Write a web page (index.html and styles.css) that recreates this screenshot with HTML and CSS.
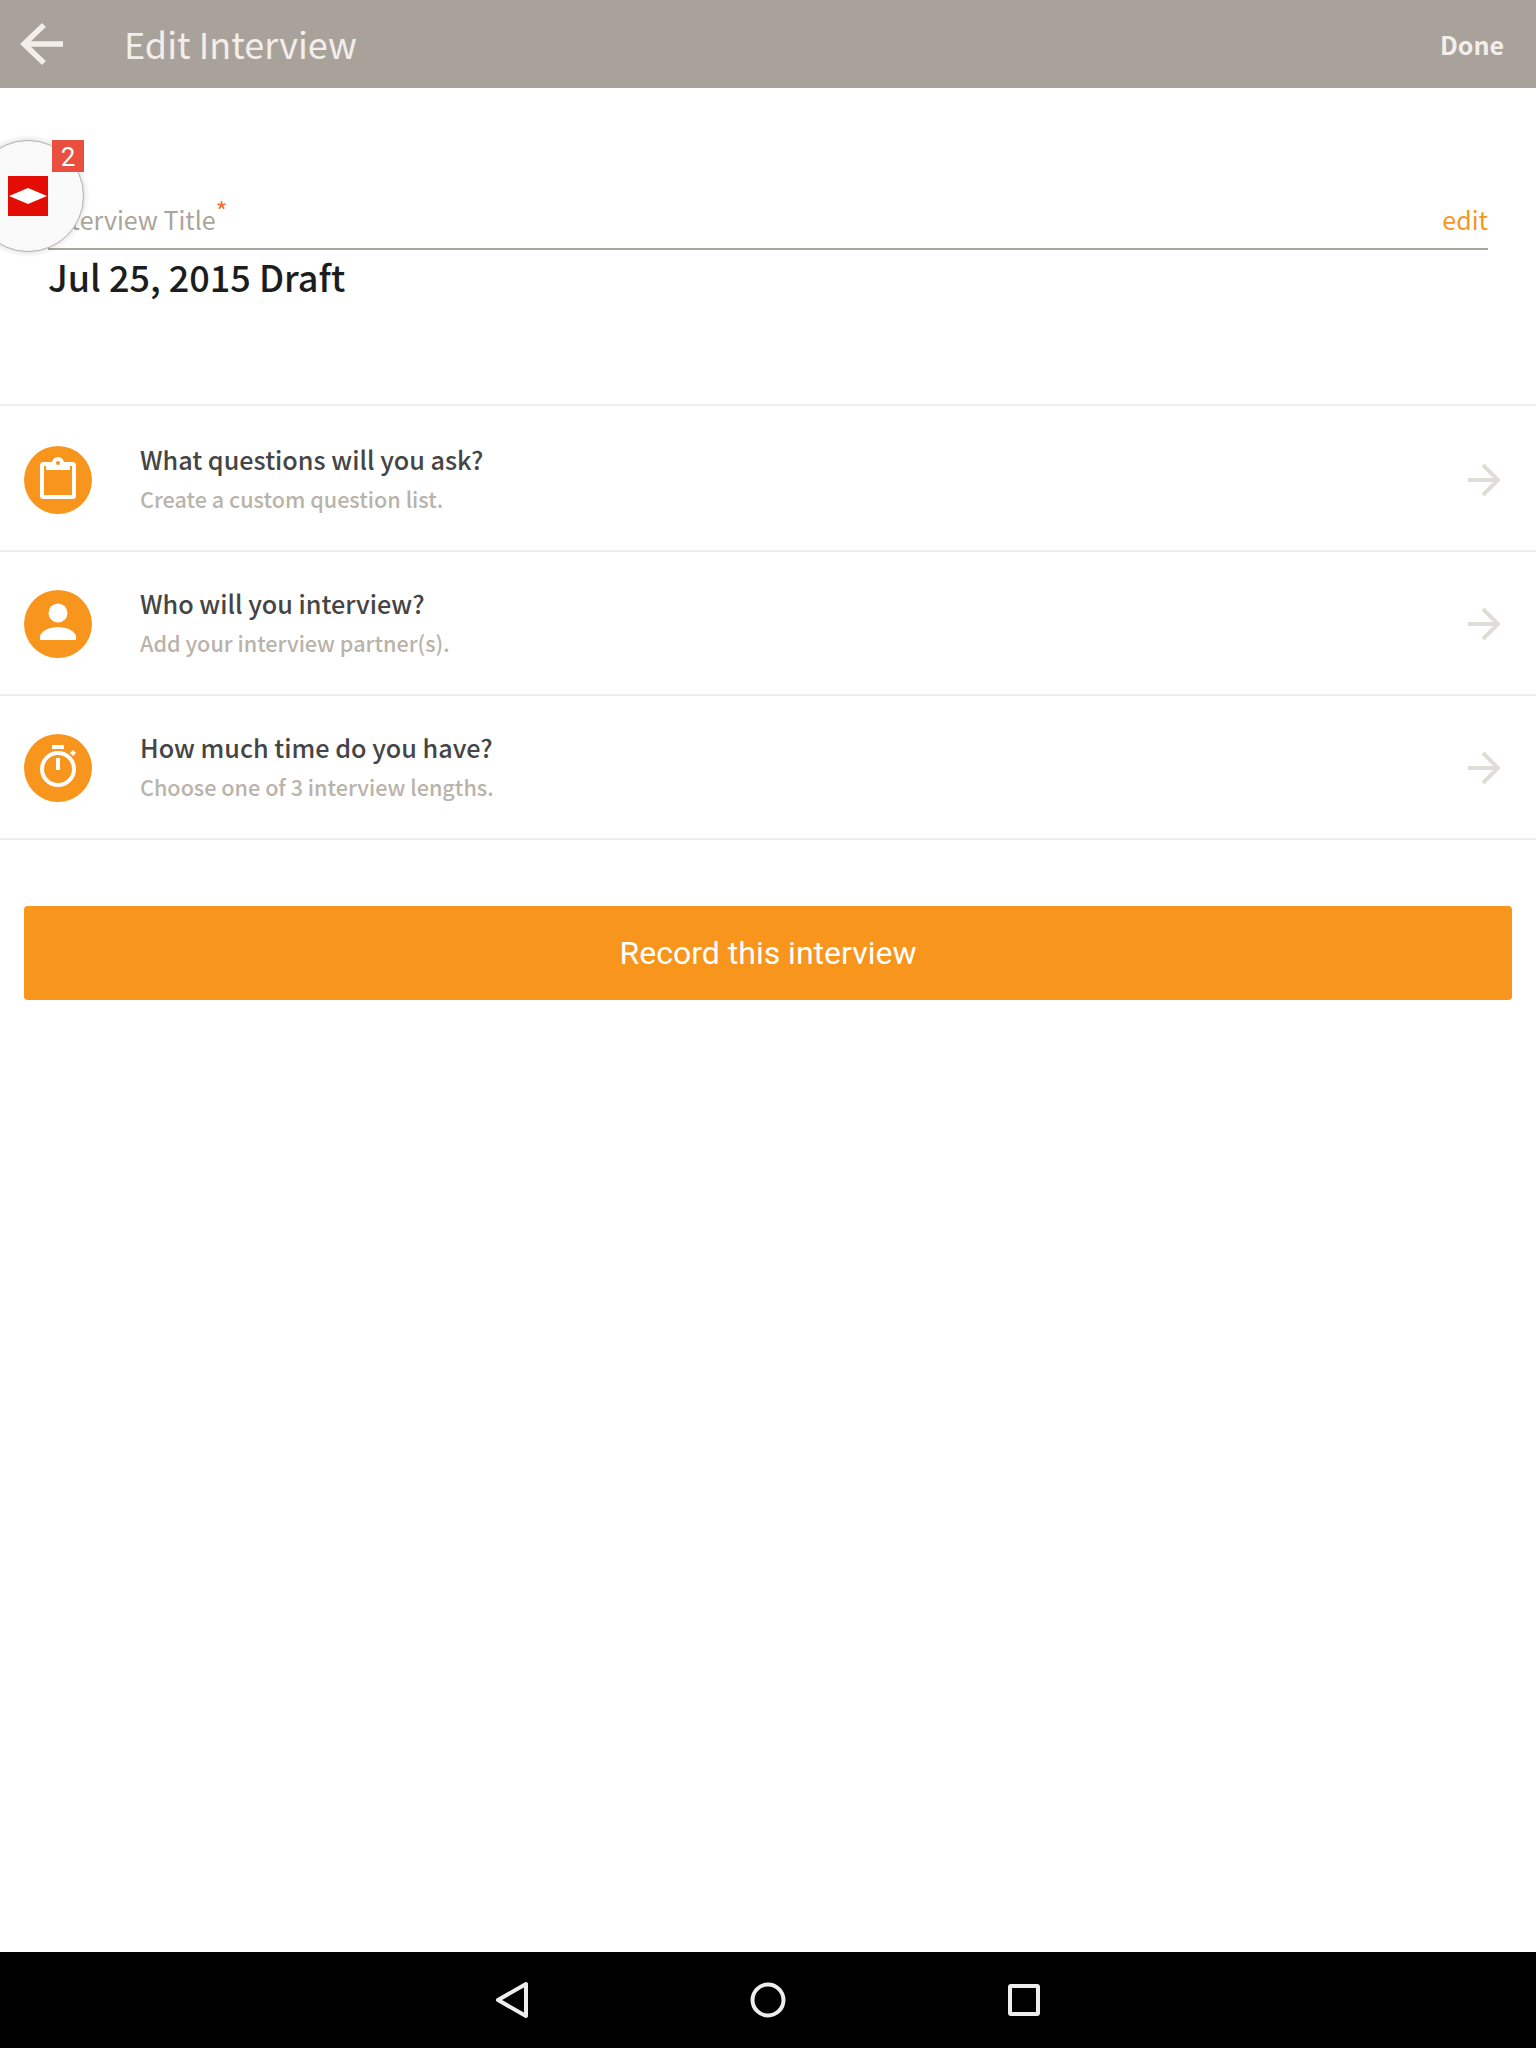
FILE: index.html
```html
<!DOCTYPE html>
<html>
<head>
<meta charset="utf-8" />
<title>Edit Interview</title>
<link rel="stylesheet" href="styles.css">
</head>
<body>
<div class="screen">
  <header class="topbar">
    <svg class="back" width="44" height="44" viewBox="0 0 44 44"><path d="M43 22H4M24 3 4 22l20 19" /></svg>
    <h1 class="topbar-title">Edit Interview</h1>
    <a class="done" href="#">Done</a>
  </header>

  <section class="title-field">
    <div class="field-label">
      <span class="label-text">Interview Title<sup class="required">*</sup></span>
      <a class="edit" href="#">edit</a>
    </div>
    <div class="field-value">Jul 25, 2015 Draft</div>
  </section>

  <ul class="steps">
    <li class="step">
      <div class="step-icon">
        <svg width="68" height="68" viewBox="0 0 68 68">
          <rect x="18" y="18" width="32" height="33" rx="1.5" fill="none" stroke="#fff" stroke-width="4" />
          <rect x="22" y="16" width="24" height="8" fill="#fff" />
          <circle cx="34" cy="17" r="6" fill="#fff" />
          <circle cx="34" cy="17" r="2" fill="#f8951d" />
        </svg>
      </div>
      <div class="step-text">
        <div class="step-title">What questions will you ask?</div>
        <div class="step-sub">Create a custom question list.</div>
      </div>
      <svg class="chevron" width="32" height="34" viewBox="0 0 32 34"><path d="M0 17h30M15 2l15 15-15 15" /></svg>
    </li>
    <li class="step">
      <div class="step-icon">
        <svg width="68" height="68" viewBox="0 0 68 68" fill="#fff">
          <circle cx="34" cy="23" r="9.500" />
          <path d="M16 50v-3c0-6 10-10 18-10s18 4 18 10v3z" />
        </svg>
      </div>
      <div class="step-text">
        <div class="step-title">Who will you interview?</div>
        <div class="step-sub">Add your interview partner(s).</div>
      </div>
      <svg class="chevron" width="32" height="34" viewBox="0 0 32 34"><path d="M0 17h30M15 2l15 15-15 15" /></svg>
    </li>
    <li class="step">
      <div class="step-icon">
        <svg width="68" height="68" viewBox="0 0 68 68" fill="#fff">
          <circle cx="34" cy="35" r="16" fill="none" stroke="#fff" stroke-width="4" />
          <rect x="28" y="11" width="12" height="4" />
          <rect x="32" y="24" width="4" height="12" />
          <path d="M46 19l3-3 3 3-3 3z" />
        </svg>
      </div>
      <div class="step-text">
        <div class="step-title">How much time do you have?</div>
        <div class="step-sub">Choose one of 3 interview lengths.</div>
      </div>
      <svg class="chevron" width="32" height="34" viewBox="0 0 32 34"><path d="M0 17h30M15 2l15 15-15 15" /></svg>
    </li>
  </ul>

  <div class="actions">
    <a class="record" href="#">Record this interview</a>
  </div>

  <nav class="navbar">
    <svg width="40" height="40" viewBox="0 0 40 40"><path d="M34 4v32L6 20z" /></svg>
    <svg width="40" height="40" viewBox="0 0 40 40"><circle cx="20" cy="20" r="15.500" /></svg>
    <svg width="40" height="40" viewBox="0 0 40 40"><rect x="6" y="6" width="28" height="28" rx="1" /></svg>
  </nav>
</div>

<!-- floating chat head, sits over the field label -->
<div class="bubble">
  <div class="bubble-logo"><div class="diamond"></div></div>
  <div class="bubble-badge">2</div>
</div>
</body>
</html>
```

FILE: styles.css
```css
* {
  box-sizing: border-box;
  margin: 0;
  padding: 0;
}
body {
  background: #fff;
  font-family: 'Noto Sans CJK JP', 'Noto Sans', sans-serif;
  overflow: hidden;
}
.screen {
  display: flex;
  flex-direction: column;
  height: 2048px;
}
.topbar {
  align-items: center;
  background: #a9a29b;
  display: flex;
  flex: none;
  height: 88px;
  padding: 0 32px 0 20px;
}
.back {
  fill: none;
  margin-right: 60px;
  stroke: #f2efea;
  stroke-width: 5.500;
}
.topbar-title {
  color: #f2efea;
  flex: 1;
  font-size: 36px;
  font-weight: 400;
  line-height: 84px;
  margin-bottom: 3px;
}
.done {
  color: #f2efea;
  font-size: 25px;
  font-weight: 700;
  line-height: 88px;
  text-decoration: none;
}
.title-field {
  flex: none;
  height: 316px;
  padding: 104px 48px 0;
}
.field-label {
  align-items: flex-end;
  border-bottom: 2px solid #a9a498;
  display: flex;
  height: 58px;
  justify-content: space-between;
  padding-bottom: 9px;
}
.label-text {
  color: #aba49b;
  font-size: 25px;
  line-height: 40px;
}
.required {
  color: #f26b2f;
  font-size: 25px;
  line-height: 0;
}
.edit {
  color: #f8951d;
  font-size: 25px;
  line-height: 40px;
  text-decoration: none;
}
.field-value {
  color: #1d1d1d;
  font-size: 36px;
  font-weight: 500;
  line-height: 52px;
}
.steps {
  border-top: 2px solid #eeede9;
  list-style: none;
  padding-top: 2px;
}
.step {
  align-items: center;
  border-bottom: 2px solid #eeede9;
  display: flex;
  height: 144px;
  padding: 2px 36px 0 24px;
}
.step-icon {
  background: #f8951d;
  border-radius: 50%;
  flex: none;
  height: 68px;
  width: 68px;
}
.step-icon svg {
  display: block;
}
.step-text {
  flex: 1;
  padding: 0 0 4px 48px;
}
.step-title {
  color: #454545;
  font-size: 25.200px;
  font-weight: 500;
  line-height: 40px;
}
.step-sub {
  color: #b9b3aa;
  font-size: 21.600px;
  font-weight: 500;
  line-height: 38px;
  margin-top: 1px;
}
.chevron {
  fill: none;
  stroke: #e0ddd7;
  stroke-width: 4;
}
.actions {
  padding: 66px 24px 0;
}
.record {
  background: #f8951d;
  border-radius: 4px;
  color: #fff;
  display: block;
  font-family: Roboto, sans-serif;
  font-size: 32px;
  height: 94px;
  line-height: 94px;
  text-align: center;
  text-decoration: none;
}
.navbar {
  align-items: center;
  background: #000;
  display: flex;
  gap: 216px;
  height: 96px;
  justify-content: center;
  margin-top: auto;
}
.navbar svg {
  fill: none;
  stroke: #eee;
  stroke-linejoin: round;
  stroke-width: 4;
}
.bubble {
  background: #fafafa;
  border: 1px solid #b0b0b0;
  border-radius: 50%;
  box-shadow: 0 0 6px rgba(0, 0, 0, .18);
  height: 112px;
  left: -28px;
  position: absolute;
  top: 140px;
  width: 112px;
}
.bubble-logo {
  align-items: center;
  background: #e30d05;
  display: flex;
  height: 40px;
  justify-content: center;
  left: 35px;
  position: absolute;
  top: 35px;
  width: 40px;
}
.diamond {
  background: #fff;
  clip-path: polygon(50% 0, 100% 50%, 50% 100%, 0 50%);
  height: 16px;
  width: 38px;
}
.bubble-badge {
  background: #e94f3f;
  color: #fff;
  font-family: Roboto, sans-serif;
  font-size: 26px;
  height: 32px;
  left: 79px;
  line-height: 34px;
  position: absolute;
  text-align: center;
  top: -1px;
  width: 32px;
}
```
